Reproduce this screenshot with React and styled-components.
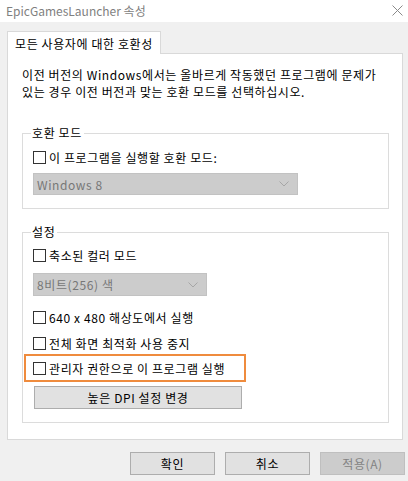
import React from "react";
import styled, {createGlobalStyle} from "styled-components";

const GlobalStyle = createGlobalStyle`
  html, body {
    margin: 0;
    padding: 0;
    background: #f0f0f0;
  }
  body {
    font-family: "Noto Sans CJK KR", "Noto Sans", sans-serif;
    font-size: 12px;
    color: #000;
  }
`;

const Window = styled.div`
  width: 408px;
  height: 481px;
  background: #f0f0f0;
  display: flex;
  flex-direction: column;
  overflow: hidden;
`;

const TitleBar = styled.div`
  height: 22px;
  background: #fff;
  display: flex;
  align-items: center;
  justify-content: space-between;
  padding: 0 5px 2px 6px;
  box-sizing: border-box;
  color: #7f7f7f;
  font-size: 12px;
`;

const Body = styled.div`
  padding: 9px 5px 0 7px;
  display: flex;
  flex-direction: column;
  letter-spacing: 0.6px;
`;

const TabStrip = styled.div`
  display: flex;
  height: 22px;
`;

const Tab = styled.div`
  background: #fff;
  border: 1px solid #d9d9d9;
  border-bottom: none;
  padding: 0 7px 0 7px;
  display: flex;
  align-items: center;
  margin-bottom: -1px;
  position: relative;
  z-index: 1;
  height: 23px;
  box-sizing: border-box;
`;

const Panel = styled.div`
  background: #fff;
  border: 1px solid #d9d9d9;
  height: 387px;
  box-sizing: border-box;
  padding: 12px 13px 0 14px;
  display: flex;
  flex-direction: column;
`;

const Description = styled.p`
  margin: 0;
  line-height: 17px;
  white-space: nowrap;
`;

const Group = styled.fieldset`
  margin: ${p => p.$top}px 0 0 0;
  border: 1px solid #dcdcdc;
  padding: 0 10px 13px 10px;
  display: flex;
  flex-direction: column;
  align-items: flex-start;
  min-width: 0;
`;

const Legend = styled.legend`
  padding: 0 2px 0 1px;
  margin-left: -2px;
  line-height: 16px;
`;

const CheckRow = styled.label`
  display: flex;
  align-items: center;
  height: 20px;
  white-space: nowrap;
  margin-top: ${p => p.$top || 0}px;
`;

const Box = styled.span`
  width: 13px;
  height: 13px;
  box-sizing: border-box;
  border: 1px solid #333;
  background: #fff;
  margin-right: 3px;
  flex-shrink: 0;
`;

const Highlight = styled.div`
  border: 2px solid #ef8b3d;
  margin: 1px 0 0 -9px;
  padding: 0 0 0 7px;
  width: 222px;
  height: 28px;
  box-sizing: border-box;
  display: flex;
  align-items: center;
`;

const Select = styled.div`
  width: ${p => p.$width}px;
  height: ${p => p.$height}px;
  margin-top: ${p => p.$top}px;
  box-sizing: border-box;
  background: #cccccc;
  border: 1px solid #c2c2c2;
  color: #777;
  display: flex;
  align-items: center;
  justify-content: space-between;
  padding: 0 8px 0 3px;
`;

const Button = styled.button`
  font: inherit;
  letter-spacing: inherit;
  width: ${p => p.$width}px;
  height: 23px;
  box-sizing: border-box;
  background: ${p => (p.disabled ? "#cccccc" : "#e1e1e1")};
  border: 1px solid ${p => (p.disabled ? "#bfbfbf" : "#adadad")};
  color: ${p => (p.disabled ? "#838383" : "#000")};
  padding: 0;
  margin: ${p => p.$margin || "0"};
  display: flex;
  align-items: center;
  justify-content: center;
`;

const Footer = styled.div`
  display: flex;
  justify-content: flex-end;
  gap: 10px;
  margin: 12px -2px 0 0;
`;

const Chevron = () => (
    <svg width="10" height="6" viewBox="0 0 10 6">
        <path d="M0.5 0.5 L5 5 L9.5 0.5" fill="none" stroke="#a6a6a6" strokeWidth="1"/>
    </svg>
);

const CloseIcon = () => (
    <svg width="11" height="11" viewBox="0 0 11 11">
        <path d="M0.5 0.5 L10.5 10.5 M10.5 0.5 L0.5 10.5" stroke="#8a8a8a" strokeWidth="1"/>
    </svg>
);

const Check = ({children, top}) => (
    <CheckRow $top={top}>
        <Box/>
        {children}
    </CheckRow>
);

export default function App() {
    return (
        <Window>
            <GlobalStyle/>
            <TitleBar>
                <span>EpicGamesLauncher 속성</span>
                <CloseIcon/>
            </TitleBar>
            <Body>
                <TabStrip>
                    <Tab>모든 사용자에 대한 호환성</Tab>
                </TabStrip>
                <Panel>
                    <Description>
                        이전 버전의 Windows에서는 올바르게 작동했던 프로그램에 문제가<br/>
                        있는 경우 이전 버전과 맞는 호환 모드를 선택하십시오.
                    </Description>

                    <Group $top={25}>
                        <Legend>호환 모드</Legend>
                        <Check top={6}>이 프로그램을 실행할 호환 모드:</Check>
                        <Select $width={265} $height={22} $top={6}>
                            <span>Windows 8</span>
                            <Chevron/>
                        </Select>
                    </Group>

                    <Group $top={15}>
                        <Legend>설정</Legend>
                        <Check top={5}>축소된 컬러 모드</Check>
                        <Select $width={174} $height={23} $top={8}>
                            <span>8비트(256) 색</span>
                            <Chevron/>
                        </Select>
                        <Check top={11}>640 x 480 해상도에서 실행</Check>
                        <Check top={6}>전체 화면 최적화 사용 중지</Check>
                        <Highlight>
                            <Check>관리자 권한으로 이 프로그램 실행</Check>
                        </Highlight>
                        <Button $width={208} $margin="4px 0 0 1px">높은 DPI 설정 변경</Button>
                    </Group>
                </Panel>
                <Footer>
                    <Button $width={85}>확인</Button>
                    <Button $width={85}>취소</Button>
                    <Button $width={85} disabled>적용(A)</Button>
                </Footer>
            </Body>
        </Window>
    );
}
